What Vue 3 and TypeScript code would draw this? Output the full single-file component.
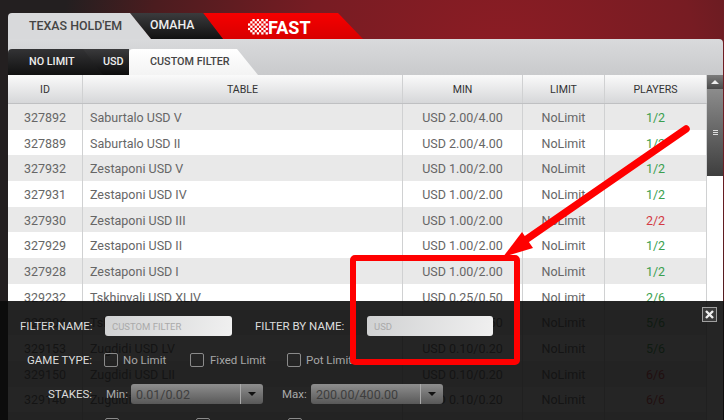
<template>
  <div class="page">
    <div class="tabs">
      <div class="tab tab-active">TEXAS HOLD'EM</div>
      <div class="tab tab-dark">OMAHA</div>
      <div class="tab tab-fast">
        <svg class="flag" width="20" height="16" viewBox="0 0 20 16">
          <g fill="#fff">
            <rect v-for="c in flagCells" :key="c" :x="c.split(',')[0]" :y="c.split(',')[1]" width="2.3" height="2.3" />
          </g>
        </svg>
        <span>FAST</span>
      </div>
    </div>

    <div class="panel">
      <div class="subtabs">
        <div class="sub sub-dark sub-first">NO LIMIT</div>
        <div class="sub sub-dark sub-usd">USD</div>
        <div class="sub sub-active">CUSTOM FILTER</div>
      </div>

      <div class="body">
        <div class="grid">
          <div class="row head">
            <div class="cell c-id">ID</div>
            <div class="cell c-table">TABLE</div>
            <div class="cell c-min">MIN</div>
            <div class="cell c-limit">LIMIT</div>
            <div class="cell c-players">PLAYERS</div>
          </div>
          <div v-for="(t, i) in tables" :key="t.id" class="row" :class="{ alt: i % 2 === 0 }">
            <div class="cell c-id">{{ t.id }}</div>
            <div class="cell c-table left">{{ t.name }}</div>
            <div class="cell c-min">{{ t.min }}</div>
            <div class="cell c-limit">NoLimit</div>
            <div class="cell c-players" :class="t.full ? 'red' : 'green'">{{ t.players }}</div>
          </div>
          <div class="row alt">
            <div class="cell c-id"></div>
            <div class="cell c-table"></div>
            <div class="cell c-min"></div>
            <div class="cell c-limit"></div>
            <div class="cell c-players"></div>
          </div>
        </div>
        <div class="scroll">
          <div class="scroll-up"><span></span></div>
          <div class="scroll-thumb"><i></i><i></i><i></i></div>
        </div>
      </div>
    </div>

    <div class="filter">
      <button class="close" type="button">
        <svg width="9" height="9" viewBox="0 0 9 9"><path d="M1 1l7 7M8 1L1 8" stroke="#eee" stroke-width="2.4" /></svg>
      </button>
      <div class="f-row f-names">
        <label class="l-name">FILTER NAME:</label>
        <div class="input">CUSTOM FILTER</div>
        <label class="l-by">FILTER BY NAME:</label>
        <div class="input input-usd">USD</div>
      </div>
      <div class="f-row f-types">
        <label class="l-type">GAME TYPE:</label>
        <span class="check"></span><span class="c-label w1">No Limit</span>
        <span class="check"></span><span class="c-label w2">Fixed Limit</span>
        <span class="check"></span><span class="c-label">Pot Limit</span>
      </div>
      <div class="f-row f-stakes">
        <label class="l-stakes">STAKES:</label>
        <span class="mm">Min:</span>
        <div class="select"><span>0.01/0.02</span><b></b></div>
        <span class="mm mm-max">Max:</span>
        <div class="select"><span>200.00/400.00</span><b></b></div>
      </div>
      <div class="f-row f-last">
        <span class="check c1"></span>
        <span class="check c2"></span>
        <span class="check c3"></span>
      </div>
    </div>

    <svg class="note" width="724" height="420" viewBox="0 0 724 420">
      <path d="M686 129 L524 241" stroke="#f00" stroke-width="7.5" stroke-linecap="round" />
      <path d="M503 257 L522 232 L533 248 Z" fill="#f00" />
      <rect x="353" y="258" width="164" height="104" fill="none" stroke="#f00" stroke-width="6" rx="2" />
    </svg>
  </div>
</template>

<script setup lang="ts">
interface PokerTable {
  id: string
  name: string
  min: string
  players: string
  full?: boolean
}

const tables: PokerTable[] = [
  { id: '327892', name: 'Saburtalo USD V', min: 'USD 2.00/4.00', players: '1/2' },
  { id: '327889', name: 'Saburtalo USD II', min: 'USD 2.00/4.00', players: '1/2' },
  { id: '327932', name: 'Zestaponi USD V', min: 'USD 1.00/2.00', players: '1/2' },
  { id: '327931', name: 'Zestaponi USD IV', min: 'USD 1.00/2.00', players: '1/2' },
  { id: '327930', name: 'Zestaponi USD III', min: 'USD 1.00/2.00', players: '2/2', full: true },
  { id: '327929', name: 'Zestaponi USD II', min: 'USD 1.00/2.00', players: '1/2' },
  { id: '327928', name: 'Zestaponi USD I', min: 'USD 1.00/2.00', players: '1/2' },
  { id: '329232', name: 'Tskhinvali USD XLIV', min: 'USD 0.25/0.50', players: '2/6' },
  { id: '329204', name: 'Tskhinvali USD XVI', min: 'USD 0.25/0.50', players: '5/6' },
  { id: '329153', name: 'Zugdidi USD LV', min: 'USD 0.10/0.20', players: '5/6' },
  { id: '329150', name: 'Zugdidi USD LII', min: 'USD 0.10/0.20', players: '6/6', full: true },
  { id: '329146', name: 'Zugdidi USD XLVIII', min: 'USD 0.10/0.20', players: '6/6', full: true },
]

// checkered flag, wider in the middle rows
const flagCells: string[] = []
const flagInset = [2, 1, 0, 0, 0, 1, 2]
for (let y = 0; y < 7; y++) {
  for (let x = flagInset[y]; x < 9; x++) {
    if ((x + y) % 2 === 0) {
      flagCells.push(`${x * 2.2},${y * 2.2}`)
    }
  }
}
</script>

<style scoped>
.page {
  position: relative;
  width: 724px;
  height: 420px;
  overflow: hidden;
  font-family: Roboto, "Liberation Sans", sans-serif;
  background: radial-gradient(ellipse 440px 420px at 500px 70px, #8e1c24 0%, #771c23 45%, #4b1c1f 80%, #231f20 100%), #231f20;
  box-sizing: border-box;
  padding: 13px 0 0 8px;
}

.tabs {
  display: flex;
  height: 26px;
  font-weight: 500;
}

.tab {
  display: flex;
  align-items: center;
  height: 26px;
  box-sizing: border-box;
  flex: none;
}

.tab-active {
  width: 143px;
  padding: 0 0 2px 21px;
  color: #444;
  font-size: 12.4px;
  background: #d8d9db;
  border-radius: 4px 0 0 0;
  clip-path: polygon(0 0, 122px 0, 143px 26px, 0 26px);
  margin-right: -21px;
  z-index: 2;
}

.tab-dark {
  width: 93px;
  padding: 0 0 2px 20px;
  font-size: 12.3px;
  color: #eee;
  background: linear-gradient(#3b3b3d, #111);
  clip-path: polygon(0 0, 73px 0, 93px 26px, 21px 26px);
  margin-right: -20px;
  z-index: 1;
}

.tab-fast {
  width: 160px;
  color: #fff;
  font-size: 18px;
  font-weight: 700;
  padding: 2px 0 0 45px;
  background: linear-gradient(#f60000, #d80000);
  clip-path: polygon(0 0, 135px 0, 160px 26px, 20px 26px);
}

.flag {
  flex: none;
}

.panel {
  width: 715px;
  height: 381px;
  background: linear-gradient(#d9dadc, #c9cacc 36px);
  border-radius: 0 4px 0 0;
}

.subtabs {
  display: flex;
  padding-top: 10px;
  height: 36px;
  box-sizing: border-box;
  font-size: 10.8px;
  font-weight: 500;
}

.sub {
  display: flex;
  align-items: center;
  height: 26px;
  box-sizing: border-box;
  padding-bottom: 2px;
  flex: none;
}

.sub-dark {
  color: #eee;
  background: linear-gradient(#333335, #111);
}

.sub-first {
  width: 95px;
  padding-left: 21px;
  border-radius: 4px 0 0 0;
  clip-path: polygon(0 0, 75px 0, 95px 26px, 0 26px);
  z-index: 1;
}

.sub-usd {
  width: 46px;
  margin-left: -20px;
  padding-left: 20px;
  background: linear-gradient(#3a3a3c, #0c0c0c);
}

.sub-active {
  width: 129px;
  color: #444;
  padding-left: 21px;
  background: linear-gradient(#fff, #f3f3f3);
  clip-path: polygon(0 0, 108px 0, 129px 26px, 0 26px);
  border-radius: 4px 0 0 0;
}

.body {
  display: flex;
  background: #fff;
}

.grid {
  width: 699px;
  height: 345px;
  overflow: hidden;
}

.row {
  display: flex;
  height: 25.7px;
  background: #fff;
}

.row.alt {
  background: #e9e9e9;
}

.row.head {
  height: 29px;
  background: linear-gradient(#fafafa, #d6d7d9);
  border-bottom: 1px solid #bfc0c2;
  box-sizing: border-box;
}

.cell {
  display: flex;
  align-items: center;
  justify-content: center;
  box-sizing: border-box;
  padding-top: 1px;
  border-right: 1px solid #d0d1d2;
  color: #666;
  font-size: 12.5px;
}

.head .cell {
  color: #333;
  font-size: 10.6px;
}

.cell.left {
  justify-content: flex-start;
  padding-left: 7px;
}

.c-id { width: 75px; }
.c-table { width: 320px; }
.c-min { width: 120px; }
.c-limit { width: 82px; }
.c-players { width: 102px; }

.cell.green { color: #3a9f4f; }
.cell.red { color: #d43a44; }

.scroll {
  width: 16px;
  background: #fff;
}

.scroll-up {
  height: 14px;
  background: linear-gradient(#7c7c7c, #4a4a4a);
  display: flex;
  align-items: center;
  justify-content: center;
}

.scroll-up span {
  border: 4px solid transparent;
  border-top: 0;
  border-bottom: 4px solid #eee;
}

.scroll-thumb {
  height: 87px;
  background: linear-gradient(#8c8c8c, #3e3e3e);
  display: flex;
  flex-direction: column;
  align-items: center;
  justify-content: center;
  gap: 1px;
}

.scroll-thumb i {
  width: 5px;
  height: 1px;
  background: #ddd;
}

.filter {
  position: absolute;
  left: 0;
  top: 301px;
  width: 724px;
  height: 119px;
  background: rgba(10, 10, 10, 0.89);
  color: #ddd;
  font-size: 11.5px;
}

.f-row {
  display: flex;
  align-items: center;
}

.f-names {
  height: 20px;
  margin-top: 15px;
  padding-left: 20px;
}

.l-name { width: 85px; }

.input {
  width: 127px;
  height: 20px;
  line-height: 21px;
  border-radius: 3px;
  background: linear-gradient(100deg, #d0d1d2, #f0f0f0);
  color: #aaa;
  font-size: 9.5px;
  padding-left: 7px;
  box-sizing: border-box;
}

.l-by {
  margin-left: 23px;
  width: 112px;
}

.input-usd {
  width: 126px;
}

.f-types {
  height: 20px;
  margin-top: 14px;
  padding-left: 27px;
}

.l-type { width: 77px; }

.check {
  display: inline-block;
  flex: none;
  width: 14px;
  height: 14px;
  box-sizing: border-box;
  border: 1px solid #8a8a8a;
  border-radius: 2px;
}

.c-label {
  color: #a6a6a6;
  margin-left: 5px;
}

.w1 { width: 67px; }
.w2 { width: 78px; margin-left: 6px; }
.w2 + .check { margin-left: -1px; }

.f-stakes {
  height: 20px;
  margin-top: 14px;
  padding-left: 48px;
}

.l-stakes { width: 58px; }

.mm {
  color: #aaa;
  width: 25px;
}

.mm-max {
  margin-left: 19px;
  width: 29px;
}

.select {
  display: flex;
  width: 132px;
  height: 20px;
  border-radius: 3px;
  background: linear-gradient(#8e8e8e, #585858);
  color: #3e3e3e;
  font-size: 12.5px;
  box-sizing: border-box;
  align-items: center;
  padding-left: 5px;
  justify-content: space-between;
}

.select b {
  width: 23px;
  height: 20px;
  border-left: 1px solid #aaa;
  box-sizing: border-box;
  position: relative;
}

.select b::after {
  content: "";
  position: absolute;
  left: 7px;
  top: 8px;
  border: 4px solid transparent;
  border-bottom: 0;
  border-top: 4px solid #111;
}

.f-last {
  margin-top: 14px;
  height: 14px;
}

.c1 { margin-left: 105px; }
.c2 { margin-left: 77px; }
.c3 { margin-left: 78px; }

.close {
  position: absolute;
  right: 7px;
  top: 6px;
  width: 15px;
  height: 15px;
  padding: 0;
  background: #3a3a3a;
  border: 1px solid #a0a0a0;
  display: flex;
  align-items: center;
  justify-content: center;
}

.note {
  position: absolute;
  left: 0;
  top: 0;
  pointer-events: none;
}
</style>
